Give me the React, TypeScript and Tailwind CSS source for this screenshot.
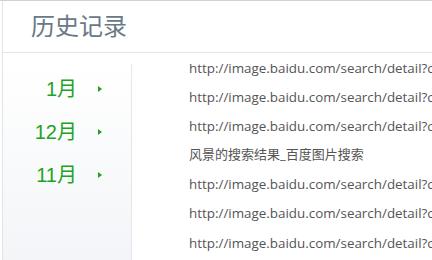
import React from 'react';

const months = ['1月', '12月', '11月'];

const links = [
  'http://image.baidu.com/search/detail?ct=503316480&z=0&ipn=d',
  'http://image.baidu.com/search/detail?ct=503316480&z=0&ipn=d',
  'http://image.baidu.com/search/detail?ct=503316480&z=0&ipn=d',
  '风景的搜索结果_百度图片搜索',
  'http://image.baidu.com/search/detail?ct=503316480&z=0&ipn=d',
  'http://image.baidu.com/search/detail?ct=503316480&z=0&ipn=d',
  'http://image.baidu.com/search/detail?ct=503316480&z=0&ipn=d',
  'http://image.baidu.com/search/detail?ct=503316480&z=0&ipn=d',
];

export default function App() {
  return (
    <div
      className="w-[432px] h-[260px] overflow-hidden bg-white border-t border-[#d2d2d2] pl-[2px]"
      style={{ fontFamily: '"Liberation Sans", "Noto Sans CJK SC", sans-serif' }}
    >
      <div className="h-full flex flex-col border-l border-[#e4e4e4]">
        <div className="h-[52px] shrink-0 border-b border-[#e6e6e6] flex items-center pl-[28px]">
          <h1 className="text-[24px] leading-none text-[#6a7888] pt-[1px]">历史记录</h1>
        </div>

        <div className="flex flex-1 min-h-0">
          <div className="w-[129px] shrink-0 mt-[11px] border-r border-[#e3e6ea] bg-gradient-to-b from-white to-[#f3f5f8] pt-[3px]">
            {months.map((m) => (
              <div key={m} className="h-[43px] flex items-center">
                <span className="w-[74px] text-right text-[20px] leading-none text-[#1fa21f]">{m}</span>
                <span className="ml-[21px] w-0 h-0 border-l-[4px] border-l-[#1fa21f] border-y-[3.5px] border-y-transparent" />
              </div>
            ))}
          </div>

          <div className="flex-1 min-w-0 overflow-hidden mt-[11px]">
            <ul className="mt-[-11px] pl-[57px] font-['Open_Sans','Noto_Sans_CJK_SC',sans-serif]">
              {links.map((l, i) => (
                <li
                  key={i}
                  className={`h-[29.2px] flex items-center whitespace-nowrap text-[#555] ${l.startsWith('http') ? 'text-[13.4px]' : 'text-[13px]'}`}
                >
                  {l}
                </li>
              ))}
            </ul>
          </div>
        </div>
      </div>
    </div>
  );
}
